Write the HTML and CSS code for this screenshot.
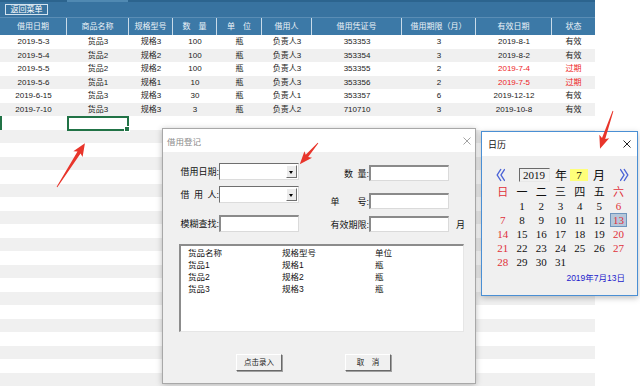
FILE: index.html
```html
<!DOCTYPE html>
<html lang="zh-CN">
<head>
    <meta charset="UTF-8">
    <meta name="viewport" content="width=device-width, initial-scale=1.0">
    <title>借用登记</title>
    <link rel="stylesheet" href="styles.css">
</head>
<body>
    <div class="sheet">
        <div class="tabstrip"></div>
        <div class="toolbar"><span class="menu-btn">返回菜单</span></div>
        <div class="row head">
            <div>借用日期</div><div>商品名称</div><div>规格型号</div><div>数&emsp;量</div><div>单&emsp;位</div>
            <div>借用人</div><div>借用凭证号</div><div>借用期限（月）</div><div>有效日期</div><div>状态</div>
        </div>
        <div class="rows">
            <div class="row"><div>2019-5-3</div><div>货品3</div><div>规格3</div><div>100</div><div>瓶</div><div>负责人3</div><div>353353</div><div>3</div><div>2019-8-1</div><div>有效</div></div>
            <div class="row"><div>2019-5-4</div><div>货品2</div><div>规格2</div><div>100</div><div>瓶</div><div>负责人3</div><div>353354</div><div>3</div><div>2019-8-2</div><div>有效</div></div>
            <div class="row"><div>2019-5-5</div><div>货品2</div><div>规格2</div><div>100</div><div>瓶</div><div>负责人3</div><div>353355</div><div>2</div><div class="late">2019-7-4</div><div class="late">过期</div></div>
            <div class="row"><div>2019-5-6</div><div>货品1</div><div>规格1</div><div>10</div><div>瓶</div><div>负责人3</div><div>353356</div><div>2</div><div class="late">2019-7-5</div><div class="late">过期</div></div>
            <div class="row"><div>2019-6-15</div><div>货品3</div><div>规格3</div><div>30</div><div>瓶</div><div>负责人1</div><div>353357</div><div>6</div><div>2019-12-12</div><div>有效</div></div>
            <div class="row"><div>2019-7-10</div><div>货品3</div><div>规格3</div><div>3</div><div>瓶</div><div>负责人2</div><div>710710</div><div>3</div><div>2019-10-8</div><div>有效</div></div>
            <div class="row active"><div></div><div class="sel"></div></div>
            <div class="row"></div><div class="row"></div><div class="row"></div><div class="row"></div>
            <div class="row"></div><div class="row"></div><div class="row"></div><div class="row"></div>
            <div class="row"></div><div class="row"></div><div class="row"></div><div class="row"></div>
            <div class="row"></div><div class="row"></div><div class="row"></div><div class="row"></div>
            <div class="row"></div><div class="row"></div><div class="row"></div><div class="row"></div>
        </div>
    </div>

    <!-- 借用登记 窗口 -->
    <div class="dialog">
        <div class="dlg-title">
            <span>借用登记</span>
            <svg class="x-icon" width="8" height="8" viewBox="0 0 8 8"><path d="M0.5 0.5L7.5 7.5M7.5 0.5L0.5 7.5" stroke="#9a9a9a" stroke-width="0.9"/></svg>
        </div>
        <div class="dlg-body">
            <div class="form">
                <div class="col-left">
                    <div class="field"><label>借用日期:</label><div class="combo"><span class="drop"></span></div></div>
                    <div class="field"><label>借&ensp;用&ensp;人:</label><div class="combo"><span class="drop"></span></div></div>
                    <div class="field search"><label>模糊查找:</label><div class="textbox"></div></div>
                </div>
                <div class="col-right">
                    <div class="field"><label>数&ensp;量:</label><div class="textbox"></div></div>
                    <div class="field f2"><label>单&emsp;&emsp;号:</label><div class="textbox"></div></div>
                    <div class="field f3"><label>有效期限:</label><div class="textbox"></div><span class="unit">月</span></div>
                </div>
            </div>
            <div class="listbox">
                <span>货品名称</span><span>规格型号</span><span>单位</span>
                <span>货品1</span><span>规格1</span><span>瓶</span>
                <span>货品2</span><span>规格2</span><span>瓶</span>
                <span>货品3</span><span>规格3</span><span>瓶</span>
            </div>
            <div class="buttons">
                <span class="btn">点击录入</span>
                <span class="btn">取&emsp;消</span>
            </div>
        </div>
    </div>

    <!-- 日历 -->
    <div class="calendar">
        <div class="cal-title">
            <span>日历</span>
            <svg class="x-icon" width="8" height="8" viewBox="0 0 8 8"><path d="M0.5 0.5L7.5 7.5M7.5 0.5L0.5 7.5" stroke="#222" stroke-width="1"/></svg>
        </div>
        <div class="cal-body">
            <div class="cal-nav">
                <svg class="chev" width="9" height="14" viewBox="0 0 9 14"><path d="M5 1L1.2 7L5 13M8.8 1L5 7L8.8 13" fill="none" stroke="#4b63d6" stroke-width="1.4"/></svg>
                <span class="year-box">2019</span>
                <span class="nav-unit">年</span>
                <span class="month-box">7</span>
                <span class="nav-unit">月</span>
                <svg class="chev next" width="9" height="14" viewBox="0 0 9 14"><path d="M0.2 1L4 7L0.2 13M4 1L7.8 7L4 13" fill="none" stroke="#4b63d6" stroke-width="1.4"/></svg>
            </div>
            <div class="cal-grid">
                <span class="red">日</span><span>一</span><span>二</span><span>三</span><span>四</span><span>五</span><span class="red">六</span>
                <span></span><span>1</span><span>2</span><span>3</span><span>4</span><span>5</span><span class="red">6</span>
                <span class="red">7</span><span>8</span><span>9</span><span>10</span><span>11</span><span>12</span><span class="red today">13</span>
                <span class="red">14</span><span>15</span><span>16</span><span>17</span><span>18</span><span>19</span><span class="red">20</span>
                <span class="red">21</span><span>22</span><span>23</span><span>24</span><span>25</span><span>26</span><span class="red">27</span>
                <span class="red">28</span><span>29</span><span>30</span><span>31</span>
            </div>
            <div class="cal-today">2019年7月13日</div>
        </div>
    </div>

    <!-- 红色箭头标注 -->
    <svg class="marks" width="640" height="386" viewBox="0 0 640 386">
        <g fill="#e8352b">
            <polygon transform="translate(57 187) rotate(-57.5)" points="0,-0.4 41,-1.8 39,-5.5 52,0 39,5.5 41,1.8 0,0.4"/>
            <polygon transform="translate(318 143) rotate(130.6)" points="0,-0.4 17,-1.6 15,-5 28,0 15,5 17,1.6 0,0.4"/>
            <polygon transform="translate(613 111) rotate(108.9)" points="0,-0.4 29,-1.7 27,-5.2 40,0 27,5.2 29,1.7 0,0.4"/>
        </g>
    </svg>
</body>
</html>
```

FILE: styles.css
```css
* {
    box-sizing: border-box;
}
body {
    margin: 0;
    width: 640px;
    height: 386px;
    overflow: hidden;
    position: relative;
    background: #fff;
    font-family: "Liberation Sans", "Noto Sans CJK SC", sans-serif;
    font-size: 8px;
    color: #222;
}

/* sheet */
.sheet {
    width: 595px;
}
.tabstrip {
    height: 2px;
    background: linear-gradient(to right, #2c648e 67px, #5089b2 67px, #5089b2 128px, #2c648e 128px);
}
.toolbar {
    height: 16px;
    padding: 2px 0 0 5px;
    background: #3873a0;
    border-bottom: 1px solid #5a8db5;
}
.menu-btn {
    display: block;
    width: 43px;
    height: 11px;
    border: 1px solid #d3e3f0;
    color: #fff;
    line-height: 9px;
    text-align: center;
}
.row {
    display: grid;
    grid-template-columns: 67px 62px 44px 44px 45px 50px 90px 74px 76px 43px;
    height: 13.5px;
    line-height: 13.5px;
    text-align: center;
    white-space: nowrap;
}
.head {
    height: 17px;
    line-height: 17px;
    background: #3c79a7;
    color: #edf3f8;
}
.head div {
    border-right: 1px solid #c9dbe9;
}
.head div:last-child {
    border-right: none;
}
.rows .row:nth-child(even) {
    background: #f0f0f0;
}
.late {
    color: #ee1c24;
}
.active {
    box-shadow: inset 2px 0 #217346;
}
.sel {
    position: relative;
    height: 15px;
    border: 2px solid #217346;
}
.sel::after {
    content: "";
    position: absolute;
    right: -3px;
    bottom: -3px;
    width: 4px;
    height: 4px;
    background: #217346;
    border: 1px solid #fff;
}

/* dialog */
.dialog {
    position: absolute;
    left: 162px;
    top: 128px;
    width: 314px;
    height: 256px;
    background: #f0f0f0;
    border: 1px solid #a8a8a8;
    box-shadow: 0 1px 6px rgba(0, 0, 0, 0.25);
}
.dlg-title {
    display: flex;
    justify-content: space-between;
    align-items: center;
    height: 23px;
    padding: 0 4px 0 4px;
    background: #fff;
    color: #8a8a8a;
    font-size: 8.5px;
}
.form {
    display: flex;
    align-items: flex-start;
    padding: 11px 0 0 14px;
}
.col-left {
    display: flex;
    flex-direction: column;
    gap: 6px;
}
.col-left .search {
    margin-top: 6px;
}
.col-right {
    display: flex;
    flex-direction: column;
    margin: 2px 0 0 28px;
}
.col-right .f2 {
    margin-top: 12px;
}
.col-right .f3 {
    margin-top: 7px;
}
.field {
    display: flex;
    align-items: center;
    font-size: 9px;
    color: #111;
}
.field label {
    width: 42px;
    text-align: right;
    white-space: nowrap;
}
.combo {
    position: relative;
    width: 80px;
    height: 17px;
    background: #fff;
    border-style: solid;
    border-width: 1px;
    border-color: #6f6f6f #dcdcdc #dcdcdc #6f6f6f;
}
.drop {
    position: absolute;
    right: 1px;
    top: 1px;
    width: 11px;
    height: 13px;
    background: #ececec;
    border-style: solid;
    border-width: 1px;
    border-color: #fff #6f6f6f #6f6f6f #fff;
}
.drop::after {
    content: "";
    position: absolute;
    left: 2px;
    top: 5px;
    border-left: 2.5px solid transparent;
    border-right: 2.5px solid transparent;
    border-top: 3px solid #000;
}
.textbox {
    width: 80px;
    height: 17px;
    background: #fff;
    border-style: solid;
    border-width: 2px 1px 1px 2px;
    border-color: #8a8a8a #dadada #dadada #8a8a8a;
}
.col-right .textbox {
    height: 16px;
}
.unit {
    margin-left: 7px;
}
.listbox {
    display: grid;
    grid-template-columns: 94px 93px auto;
    align-content: start;
    width: 285px;
    height: 88px;
    margin: 12px 0 0 16px;
    padding: 1px 7px;
    background: #fff;
    border-style: solid;
    border-width: 2px 1px 1px 2px;
    border-color: #8c8c8c #e6e6e6 #e6e6e6 #8c8c8c;
    font-size: 8.5px;
    line-height: 12px;
    color: #111;
}
.buttons {
    display: flex;
    gap: 63px;
    margin: 22px 0 0 73px;
}
.btn {
    width: 46px;
    height: 17px;
    background: #f0f0f0;
    border-style: solid;
    border-width: 1px;
    border-color: #fff #696969 #696969 #fff;
    box-shadow: 1px 1px 0 #a0a0a0;
    font-size: 7.5px;
    line-height: 15px;
    text-align: center;
}

/* calendar */
.calendar {
    position: absolute;
    left: 481px;
    top: 131px;
    width: 157px;
    height: 165px;
    background: #f0f0f0;
    border: 1px solid #4a8fd4;
    box-shadow: 0 2px 6px rgba(0, 0, 0, 0.25);
}
.cal-title {
    display: flex;
    justify-content: space-between;
    align-items: center;
    height: 24px;
    padding: 0 6px 0 6px;
    background: #fff;
    font-size: 9px;
    color: #111;
}
.cal-body {
    padding-top: 11px;
}
.cal-nav {
    display: flex;
    align-items: center;
    height: 15px;
    font-family: "Liberation Serif", "Noto Sans CJK SC", serif;
    font-size: 11px;
    color: #111;
}
.chev {
    margin-left: 14px;
}
.chev.next {
    margin-left: 15px;
}
.year-box {
    width: 31px;
    height: 14px;
    margin-left: 14px;
    padding-left: 3px;
    line-height: 13px;
    border-style: solid;
    border-width: 1px;
    border-color: #6a6a6a #e8e8e8 #e8e8e8 #6a6a6a;
}
.nav-unit {
    margin-left: 5px;
    font-size: 12px;
}
.month-box {
    width: 18px;
    height: 12px;
    margin-left: 3px;
    background: #ffff7a;
    line-height: 12px;
    text-align: center;
}
.cal-grid {
    display: grid;
    grid-template-columns: repeat(7, 19.3px);
    grid-auto-rows: 14.1px;
    margin: 2.5px 0 0 11px;
    font-family: "Liberation Serif", "Noto Sans CJK SC", serif;
    font-size: 11px;
    line-height: 14.1px;
    text-align: center;
    color: #111;
}
.cal-grid .red {
    color: #e0303a;
}
.cal-grid .today {
    margin: 0 1px;
    background: #b5c7da;
    border: 1px solid #6e95bd;
    line-height: 12px;
}
.cal-today {
    margin-top: 3px;
    padding-right: 12px;
    text-align: right;
    font-size: 8.5px;
    line-height: 12px;
    color: #1c1ccc;
}

/* arrows */
.marks {
    position: absolute;
    left: 0;
    top: 0;
}
```
